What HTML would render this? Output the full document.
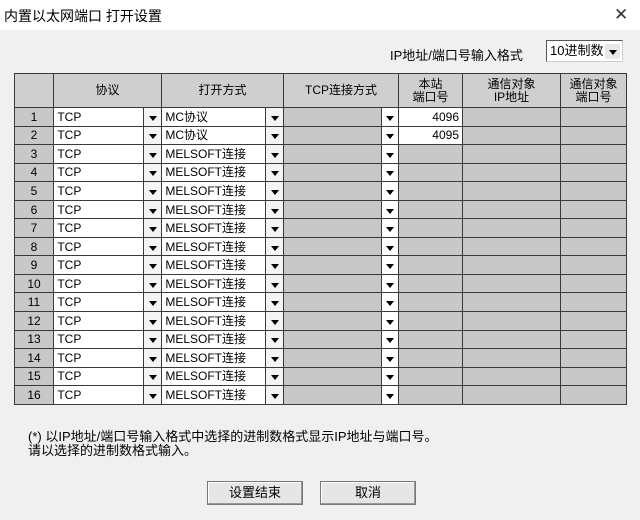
<!DOCTYPE html><html><head><meta charset="utf-8"><style>
*{margin:0;padding:0;box-sizing:border-box}
body{width:640px;height:520px;background:#f0f0f0;font-family:"Liberation Sans","Noto Sans CJK SC",sans-serif;font-size:12px;color:#000;position:relative;overflow:hidden}
.a{position:absolute}
.t{border-collapse:collapse;position:absolute;left:14px;top:73px;table-layout:fixed}
.t td{border:1px solid #3a3a3a;height:18.55px;padding:0;background:#c8c8c8;font-size:12px;line-height:16px;white-space:nowrap;overflow:hidden}
.t tr.h td{height:34px;text-align:center;line-height:13px;background:#cfcfcf}
.w{background:#fff!important}
.t td.ar{border-left:1px solid #f4f4f4;background:#f4f4f4!important}
.arr{display:inline-block;width:0;height:0;border-left:4px solid transparent;border-right:4px solid transparent;border-top:5px solid #000}
.n{text-align:center}
.btn{position:absolute;height:24px;border:1px solid #777;background:#e6e6e6;text-align:center;line-height:22px;font-size:13px;box-shadow:inset -1px -1px 0 #999,inset 1px 1px 0 #fff}
</style></head><body>
<div class="a" style="left:0;top:0;width:640px;height:30px;background:#fff"></div>
<div class="a" style="left:4px;top:6px;font-size:14px">内置以太网端口 打开设置</div>
<div class="a" style="left:614px;top:5px;font-size:17px;color:#333;font-weight:300">✕</div>
<div class="a" style="left:390px;top:45px;font-size:13px">IP地址/端口号输入格式</div>
<div class="a" style="left:546px;top:40px;width:77px;height:22px;background:#fff;border:1px solid #555;border-right-color:#ccc;border-bottom-color:#ccc;font-size:13px;line-height:19px;padding-left:3px">10进制数<span class="a" style="right:2px;top:3px;width:15px;height:15px;background:#e8e8e8;text-align:center;line-height:13px"><i class="arr"></i></span></div>
<table class="t">
<colgroup><col style="width:39px"><col style="width:90px"><col style="width:18px"><col style="width:104px"><col style="width:18px"><col style="width:98px"><col style="width:17px"><col style="width:64px"><col style="width:98px"><col style="width:66px"></colgroup>
<tr class="h"><td></td><td colspan="2">协议</td><td colspan="2">打开方式</td><td colspan="2">TCP连接方式</td><td>本站<br>端口号</td><td>通信对象<br>IP地址</td><td>通信对象<br>端口号</td></tr>
<tbody id="b"></tbody>
</table>
<script>
var h='';for(var i=1;i<=16;i++){var m=i<=2?'MC协议':'MELSOFT连接';var p=i==1?'4096':i==2?'4095':'';
h+='<tr><td class="n">'+i+'</td><td class="w">&nbsp;TCP</td><td class="ar n"><i class="arr"></i></td><td class="w">&nbsp;'+m+'</td><td class="ar n"><i class="arr"></i></td><td></td><td class="w n"><i class="arr"></i></td><td'+(p?' class="w" style="text-align:right;padding-right:3px"':'')+'>'+p+'</td><td></td><td></td></tr>';}
document.getElementById('b').innerHTML=h;
</script>
<div class="a" style="left:28px;top:430px;font-size:13px;line-height:14px">(*) 以IP地址/端口号输入格式中选择的进制数格式显示IP地址与端口号。<br>请以选择的进制数格式输入。</div>
<div class="btn" style="left:207px;top:481px;width:96px">设置结束</div>
<div class="btn" style="left:320px;top:481px;width:96px">取消</div>
</body></html>
